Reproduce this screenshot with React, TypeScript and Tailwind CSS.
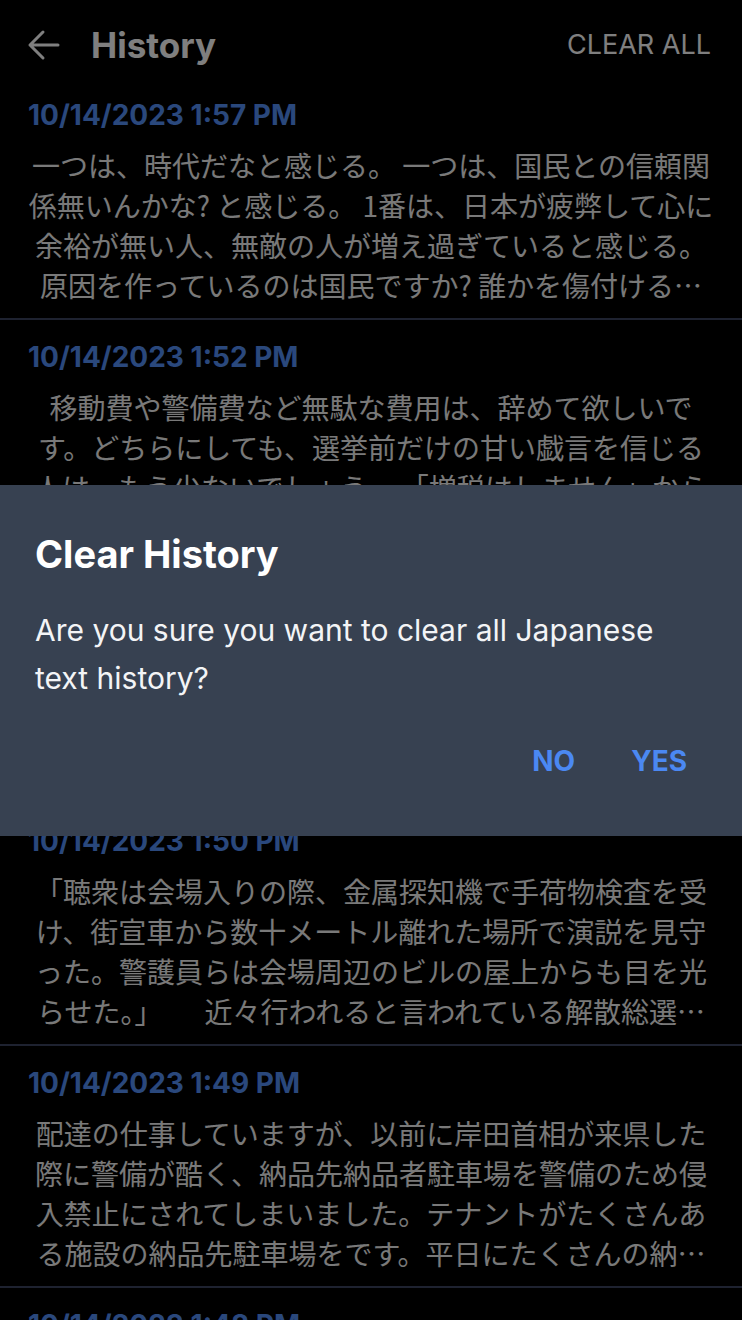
const items = [
  {
    date: "10/14/2023 1:57 PM",
    text: "一つは、時代だなと感じる。 一つは、国民との信頼関係無いんかな? と感じる。 1番は、日本が疲弊して心に余裕が無い人、無敵の人が増え過ぎていると感じる。 原因を作っているのは国民ですか? 誰かを傷付けることで何かが変わると思っている人が増えているのでしょう。",
  },
  {
    date: "10/14/2023 1:52 PM",
    text: "移動費や警備費など無駄な費用は、辞めて欲しいです。どちらにしても、選挙前だけの甘い戯言を信じる人は、もう少ないでしょう。 「増税はしません」からの増税ばかりですから。",
  },
  {
    date: "10/14/2023 1:51 PM",
    text: "首相の地方視察は必要だと思いますが、警備の負担は地元にとって大きいです。交通規制で仕事に影響が出ることもあり、もう少し配慮してほしいと感じました。",
  },
  {
    date: "10/14/2023 1:50 PM",
    text: "「聴衆は会場入りの際、金属探知機で手荷物検査を受け、街宣車から数十メートル離れた場所で演説を見守った。警護員らは会場周辺のビルの屋上からも目を光らせた。」　　近々行われると言われている解散総選挙に向けて、各党の動きが活発になっている。",
  },
  {
    date: "10/14/2023 1:49 PM",
    text: "配達の仕事していますが、以前に岸田首相が来県した際に警備が酷く、納品先納品者駐車場を警備のため侵入禁止にされてしまいました。テナントがたくさんある施設の納品先駐車場をです。平日にたくさんの納品業者が困っていました。",
  },
  {
    date: "10/14/2023 1:48 PM",
    text: "警備が厳しくなるのは仕方ないことですが、一般の人の生活にも影響が出ないようにしてほしいです。",
  },
];

function BackArrow() {
  return (
    <svg width="34" height="32" viewBox="0 0 34 32" fill="none">
      <path
        d="M32 16H4M17 3L4 16l13 13"
        stroke="currentColor"
        strokeWidth="3"
        strokeLinecap="round"
        strokeLinejoin="round"
      />
    </svg>
  );
}

export default function App() {
  return (
    <div
      className="relative h-[1320px] overflow-hidden bg-black text-white"
      style={{ fontFamily: 'Inter, "Noto Sans CJK JP", sans-serif' }}
    >
      {/* header */}
      <div className="flex h-[78px] items-center justify-between pl-[26px] pr-[31px] pt-3">
        <div className="flex items-center gap-[31px]">
          <BackArrow />
          <h1 className="text-[35px] font-bold">History</h1>
        </div>
        <button className="text-[27px]">CLEAR ALL</button>
      </div>

      {/* list */}
      <div>
        {items.map((item) => (
          <div
            key={item.date}
            className="border-b-2 border-[#3c4460] px-[28px] pb-[13px] pt-[21px]"
          >
            <div className="text-[28px] font-bold leading-[32px] text-[#5590f8]">
              {item.date}
            </div>
            <p
              className="mt-[14px] line-clamp-4 text-center text-[28px] leading-[40px] text-[#f2f2f2]"
              style={{ fontFamily: '"Noto Sans CJK JP", sans-serif' }}
            >
              {item.text}
            </p>
          </div>
        ))}
      </div>

      {/* confirm dialog */}
      <div className="absolute inset-0 flex items-center bg-black/50">
        <div className="w-full bg-[#374151] pb-[59px] pl-[35px] pr-[55px] pt-[45px]">
          <h2 className="text-[38px] font-bold leading-[48px]">Clear History</h2>
          <p className="mt-[28px] text-[30px] leading-[48px] text-[#f3f4f6]">
            Are you sure you want to clear all Japanese text history?
          </p>
          <div className="mt-[43px] flex justify-end gap-[56px]">
            <button className="text-[28px] font-bold leading-[32px] text-[#4b88f2]">
              NO
            </button>
            <button className="text-[28px] font-bold leading-[32px] text-[#4b88f2]">
              YES
            </button>
          </div>
        </div>
      </div>
    </div>
  );
}
